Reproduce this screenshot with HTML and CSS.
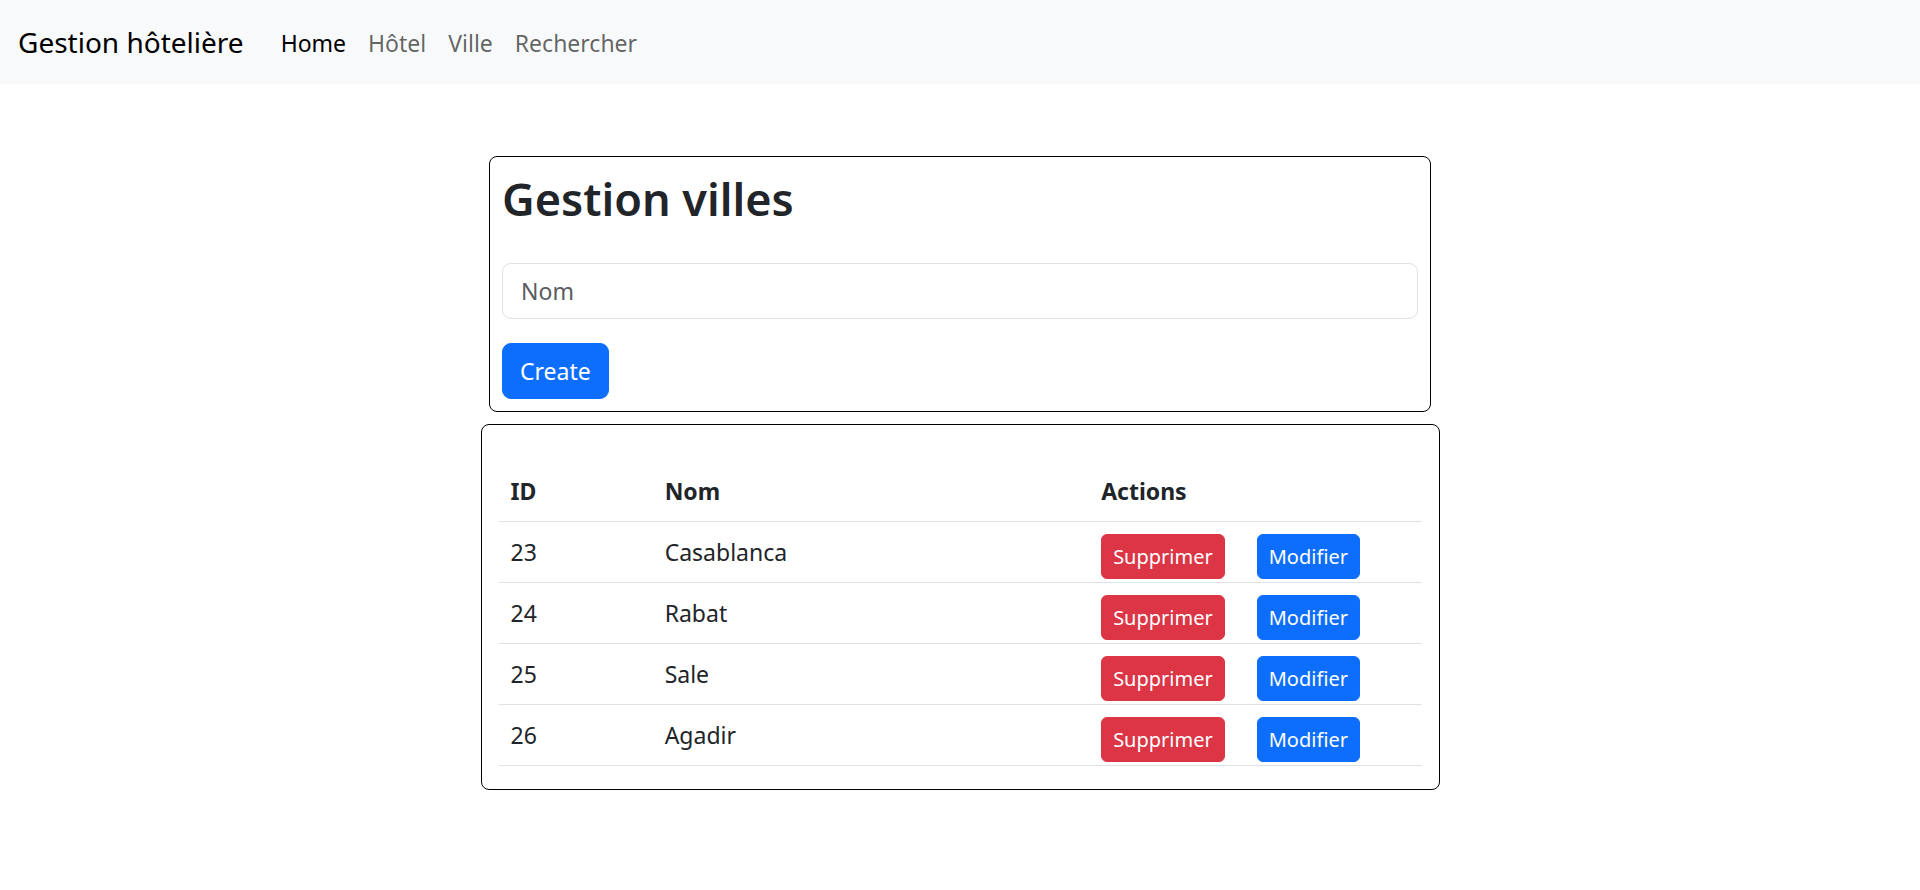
FILE: index.html
```html
<!DOCTYPE html>
<html lang="fr">
<head>
<meta charset="utf-8">
<title>Gestion hôtelière</title>
<link rel="stylesheet" href="styles.css">
</head>
<body>
<nav class="navbar">
  <a class="brand" href="#">Gestion hôtelière</a>
  <ul class="nav-links">
    <li><a class="nav-link active" href="#">Home</a></li>
    <li><a class="nav-link" href="#">Hôtel</a></li>
    <li><a class="nav-link" href="#">Ville</a></li>
    <li><a class="nav-link" href="#">Rechercher</a></li>
  </ul>
</nav>
<main class="page">
  <section class="card card-form">
    <h1 class="title">Gestion villes</h1>
    <input class="field" type="text" placeholder="Nom">
    <button class="btn btn-primary btn-create" type="button">Create</button>
  </section>
  <section class="card card-table">
    <table class="table">
      <colgroup>
        <col class="col-id">
        <col class="col-nom">
        <col class="col-actions">
      </colgroup>
      <thead>
        <tr><th>ID</th><th>Nom</th><th>Actions</th></tr>
      </thead>
      <tbody>
        <tr><td>23</td><td>Casablanca</td><td class="actions"><button class="btn btn-sm btn-danger">Supprimer</button><button class="btn btn-sm btn-primary">Modifier</button></td></tr>
        <tr><td>24</td><td>Rabat</td><td class="actions"><button class="btn btn-sm btn-danger">Supprimer</button><button class="btn btn-sm btn-primary">Modifier</button></td></tr>
        <tr><td>25</td><td>Sale</td><td class="actions"><button class="btn btn-sm btn-danger">Supprimer</button><button class="btn btn-sm btn-primary">Modifier</button></td></tr>
        <tr><td>26</td><td>Agadir</td><td class="actions"><button class="btn btn-sm btn-danger">Supprimer</button><button class="btn btn-sm btn-primary">Modifier</button></td></tr>
      </tbody>
    </table>
  </section>
</main>
</body>
</html>
```
FILE: styles.css
```css
* { box-sizing: border-box; }
html, body {
  margin: 0;
  padding: 0;
  background: #fff;
}
body {
  font-family: "Noto Sans", "Open Sans", "DejaVu Sans", sans-serif;
  font-size: 24px;
  line-height: 1.5;
  color: #212529;
}

/* Navbar */
.navbar {
  height: 84px;
  background: #f8f9fa;
  display: flex;
  align-items: center;
  padding: 0 18px;
}
.brand {
  font-size: 28px;
  color: #000;
  text-decoration: none;
  margin-right: 37px;
  line-height: 1.5;
}
.nav-links {
  list-style: none;
  margin: 0;
  padding: 0;
  display: flex;
  gap: 22px;
  padding-top: 2px;
}
.nav-link {
  font-size: 23px;
  color: rgba(0, 0, 0, 0.62);
  text-decoration: none;
}
.nav-link.active { color: #000; }

/* Page */
.page {
  display: flex;
  flex-direction: column;
  align-items: center;
  padding-top: 72px;
  gap: 12px;
}
.card {
  border: 1px solid #000;
  border-radius: 8px;
  background: #fff;
}
.card-form {
  width: 942px;
  padding: 12px;
  display: flex;
  flex-direction: column;
  align-items: flex-start;
}
.title {
  margin: 0 0 34px;
  font-size: 45px;
  font-weight: 600;
  line-height: 60px;
  color: #212529;
}
.field {
  width: 100%;
  height: 56px;
  border: 1px solid #dee2e6;
  border-radius: 9px;
  padding: 0 18px;
  font-family: inherit;
  font-size: 23px;
  color: #212529;
  margin-bottom: 24px;
  outline: none;
}
.field::placeholder { color: #595c5f; }

.btn {
  font-family: inherit;
  border: 1px solid transparent;
  color: #fff;
  cursor: pointer;
}
.btn-primary { background: #0d6efd; border-color: #0d6efd; }
.btn-danger { background: #dc3545; border-color: #dc3545; }
.btn-create {
  height: 56px;
  padding: 0 17px;
  font-size: 23px;
  border-radius: 9px;
}
.btn-sm {
  height: 45px;
  padding: 0 11px;
  font-size: 20px;
  border-radius: 6px;
  vertical-align: top;
}
.btn-sm + .btn-sm { margin-left: 32px; }

/* Table */
.card-table {
  width: 959px;
  padding: 36px 17px 23px;
}
.table {
  width: 100%;
  border-collapse: separate;
  border-spacing: 0;
  table-layout: fixed;
}
.col-id { width: 154px; }
.col-nom { width: 436px; }
.col-actions { width: 332px; }
.table th, .table td {
  height: 61px;
  padding: 0 12px;
  border-bottom: 1px solid #dee2e6;
  text-align: left;
  vertical-align: middle;
  font-size: 23px;
  white-space: nowrap;
}
.table th { font-weight: 700; }
.table td.actions {
  vertical-align: top;
  padding-top: 12px;
}
```
